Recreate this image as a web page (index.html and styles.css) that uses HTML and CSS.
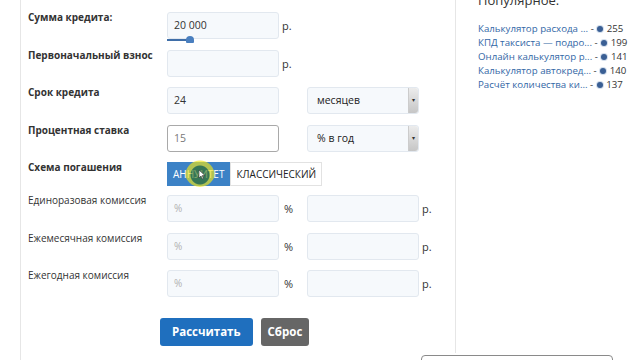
FILE: index.html
```html
<!DOCTYPE html>
<html lang="ru">
<head>
<meta charset="UTF-8">
<title>Кредитный калькулятор</title>
<link rel="stylesheet" href="styles.css">
</head>
<body>
<div class="page">
  <div class="main">
    <div class="form">
      <div class="row">
        <div class="label b">Сумма кредита:</div>
        <div class="field">
          <div class="input">20 000</div>
          <div class="slider"><span class="track"></span><span class="handle"></span></div>
        </div>
        <div class="unit">р.</div>
      </div>
      <div class="row">
        <div class="label b">Первоначальный взнос</div>
        <div class="field"><div class="input"></div></div>
        <div class="unit">р.</div>
      </div>
      <div class="row">
        <div class="label b">Срок кредита</div>
        <div class="field"><div class="input">24</div></div>
        <div class="unit"></div>
        <div class="select">месяцев<span class="arrow">&#9662;</span></div>
      </div>
      <div class="row">
        <div class="label b">Процентная ставка</div>
        <div class="field"><div class="input focus">15</div></div>
        <div class="unit"></div>
        <div class="select">% в год<span class="arrow">&#9662;</span></div>
      </div>
      <div class="row row-toggle">
        <div class="label b">Схема погашения</div>
        <div class="toggle">
          <span class="seg active">Аннуитет</span><span class="seg">Классический</span>
          <span class="pointer">
            <svg width="8" height="11" viewBox="0 0 8 11"><path d="M1 1 L1 9 L3 7 L4.5 10 L5.5 9.5 L4.2 6.6 L7 6.6 Z" fill="#fff" stroke="#333" stroke-width="0.6"/></svg>
          </span>
        </div>
      </div>
      <div class="row">
        <div class="label">Единоразовая комиссия</div>
        <div class="field"><div class="input ph">%</div></div>
        <div class="unit">%</div>
        <div class="input"></div>
        <div class="unit">р.</div>
      </div>
      <div class="row">
        <div class="label">Ежемесячная комиссия</div>
        <div class="field"><div class="input ph">%</div></div>
        <div class="unit">%</div>
        <div class="input"></div>
        <div class="unit">р.</div>
      </div>
      <div class="row">
        <div class="label">Ежегодная комиссия</div>
        <div class="field"><div class="input ph">%</div></div>
        <div class="unit">%</div>
        <div class="input"></div>
        <div class="unit">р.</div>
      </div>
      <div class="buttons">
        <button class="btn btn-primary">Рассчитать</button>
        <button class="btn btn-gray">Сброс</button>
      </div>
    </div>
  </div>
  <div class="side">
    <div class="side-title">Популярное:</div>
    <ul class="popular">
      <li><a>Калькулятор расхода ...</a> - <i class="eye"></i> 255</li>
      <li><a>КПД таксиста — подро...</a> - <i class="eye"></i> 199</li>
      <li><a>Онлайн калькулятор р...</a> - <i class="eye"></i> 141</li>
      <li><a>Калькулятор автокред...</a> - <i class="eye"></i> 140</li>
      <li><a>Расчёт количества ки...</a> - <i class="eye"></i> 137</li>
    </ul>
  </div>
</div>
<div class="bottom-box"></div>
</body>
</html>
```

FILE: styles.css
```css
* { box-sizing: border-box; }
html, body {
    margin: 0;
    height: 100%;
    background: #fff;
    overflow: hidden;
}
body {
    font-family: "Open Sans", "Liberation Sans", sans-serif;
    font-size: 11px;
    color: #333;
}
.page {
    display: flex;
    height: 100%;
    padding-left: 20px;
}
.main {
    width: 435px;
    border-left: 1px solid #e6e6e6;
    padding: 12px 0 0 7px;
}
.form {
    display: flex;
    flex-direction: column;
}
.row {
    display: grid;
    grid-template-columns: 139px 112px 28px 112px auto;
    height: 27px;
    margin-bottom: 10.5px;
    align-items: start;
}
.row-toggle {
    height: 24px;
    margin-bottom: 9px;
}
.label {
    font-size: 10px;
    line-height: 15px;
    margin-top: -2px;
    white-space: nowrap;
}
.label.b { font-weight: bold; }
.field { position: relative; }
.input {
    height: 27px;
    background: #f6f9fc;
    border: 1px solid #e2e8ef;
    border-radius: 3px;
    padding: 0 6px;
    line-height: 25px;
    font-size: 10.5px;
    color: #333;
}
.input.focus {
    background: #fff;
    border-color: #a9a9a9;
    color: #777;
}
.input.ph { color: #b0b0b0; font-size: 10px; }
.unit {
    line-height: 27px;
    padding-left: 5px;
}
.row .unit:last-child { padding-left: 3px; }
.slider {
    position: absolute;
    left: 0;
    top: 24px;
    width: 30px;
    height: 8px;
}
.track {
    position: absolute;
    left: 0; top: 3px;
    width: 21px; height: 2px;
    background: #3f6ea8;
}
.handle {
    position: absolute;
    left: 19px; top: 0;
    width: 8px; height: 7px;
    background: #4a7fbf;
    border-radius: 4px 4px 1px 1px;
}
.select {
    height: 27px;
    background: #f6f9fc;
    border: 1px solid #e2e8ef;
    border-radius: 3px;
    padding-left: 9px;
    line-height: 25px;
    font-size: 10.5px;
    position: relative;
    color: #222;
}
.arrow {
    position: absolute;
    right: 0; top: 0; bottom: 0;
    width: 10px;
    background: linear-gradient(#ececec, #c6c6c6);
    border-left: 1px solid #ccc;
    border-radius: 0 3px 3px 0;
    font-size: 6px;
    text-align: center;
    line-height: 25px;
    color: #333;
}
.toggle {
    grid-column: 2 / span 3;
    display: flex;
    height: 24px;
    position: relative;
}
.seg {
    height: 24px;
    line-height: 22px;
    padding: 0 5px;
    border: 1px solid #e2e2e2;
    text-transform: uppercase;
    font-size: 10px;
    color: #222;
}
.seg.active {
    background: #3c82c6;
    border-color: #3c82c6;
    color: #fff;
}
.pointer {
    position: absolute;
    left: 18px; top: -5px;
    width: 30px; height: 30px;
    border-radius: 50%;
    background: radial-gradient(circle at 50% 60%, rgba(50,110,10,0.6) 0, rgba(50,110,10,0.6) 9px, rgba(240,230,20,0.65) 10px, rgba(240,230,20,0.65) 14px, rgba(240,230,20,0) 15px);
}
.pointer svg {
    position: absolute;
    left: 13px; top: 12px;
}
.buttons {
    display: flex;
    gap: 8px;
    margin: 10px 0 0 132px;
}
.btn {
    font-family: inherit;
    font-size: 11.5px;
    font-weight: bold;
    color: #fff;
    border: 0;
    border-radius: 3px;
    height: 28px;
    padding: 0 12px;
}
.btn-primary { background: #1f6fbe; }
.btn-gray { background: #666; padding: 0 7px; }
.side {
    flex: 1;
    border-left: 1px solid #e6e6e6;
    padding-left: 22px;
    height: 353px;
}
.side-title {
    font-size: 13px;
    line-height: 16px;
    margin-top: -8px;
    color: #333;
}
.popular {
    list-style: none;
    margin: 14px 0 0;
    padding: 0;
    font-size: 9.7px;
    line-height: 14px;
    white-space: nowrap;
    color: #333;
}
.popular a { color: #3367a6; }
.eye {
    display: inline-block;
    width: 6px; height: 6px;
    border-radius: 50%;
    background: #3a5f94;
    box-shadow: 0 0 0 1px #d3deec;
    vertical-align: 0;
    margin: 0 1px;
}
.bottom-box {
    position: absolute;
    left: 421px; top: 355px;
    width: 192px; height: 20px;
    border: 1px solid #8a8a8a;
    border-radius: 4px;
    background: #fff;
}
```
